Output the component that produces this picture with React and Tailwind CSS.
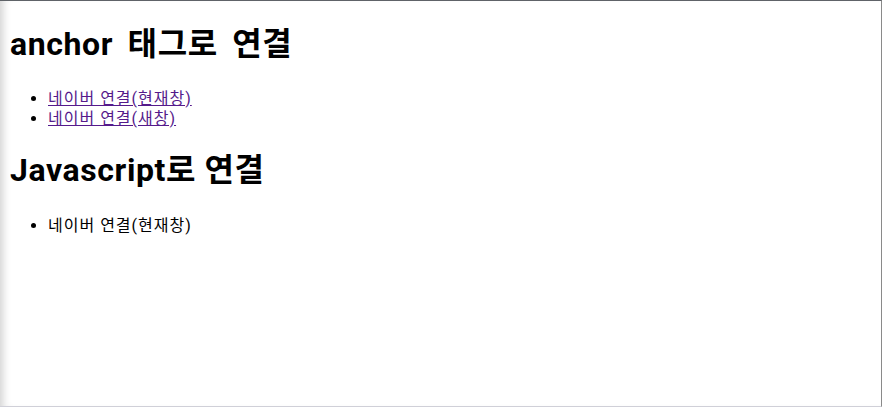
const links = [
    { label: '네이버 연결(현재창)' },
    { label: '네이버 연결(새창)' },
];

const font = { fontFamily: 'Roboto, "Noto Sans CJK KR", sans-serif' };

export default function App() {
    return (
        <div
            className="h-[407px] w-[882px] overflow-hidden bg-white border-t border-t-[#5f6368] border-r border-r-[#8a8a8a] border-b border-b-[#d0d0d8] shadow-[inset_9px_0_8px_-6px_rgba(0,0,0,0.18)] text-black"
            style={font}
        >
            <div className="px-2 pt-[22px]">
                {/* anchor */}
                <h1 className="text-[32px] font-bold leading-[42px] tracking-[0.6px] [word-spacing:6px] pl-[2px]">anchor 태그로 연결</h1>
                <ul className="list-disc pl-10 mt-[24px] text-base leading-5 tracking-[1px]">
                    {links.map((l) => (
                        <li key={l.label}>
                            <a href="#" className="underline text-[#551a8b]">{l.label}</a>
                        </li>
                    ))}
                </ul>

                {/* javascript */}
                <h1 className="mt-[20px] text-[32px] font-bold leading-[42px] tracking-[0.6px] pl-[2px]">Javascript로 연결</h1>
                <ul className="list-disc pl-10 mt-[25px] text-base leading-5 tracking-[1px]">
                    <li>네이버 연결(현재창)</li>
                </ul>
            </div>
        </div>
    );
}
